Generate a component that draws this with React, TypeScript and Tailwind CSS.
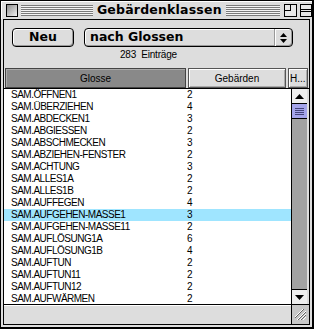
import React from "react";

const rows: [string, string][] = [
  ["SAM.ÖFFNEN1", "2"],
  ["SAM.ÜBERZIEHEN", "4"],
  ["SAM.ABDECKEN1", "3"],
  ["SAM.ABGIESSEN", "2"],
  ["SAM.ABSCHMECKEN", "3"],
  ["SAM.ABZIEHEN-FENSTER", "2"],
  ["SAM.ACHTUNG", "3"],
  ["SAM.ALLES1A", "2"],
  ["SAM.ALLES1B", "2"],
  ["SAM.AUFFEGEN", "4"],
  ["SAM.AUFGEHEN-MASSE1", "3"],
  ["SAM.AUFGEHEN-MASSE11", "2"],
  ["SAM.AUFLÖSUNG1A", "6"],
  ["SAM.AUFLÖSUNG1B", "4"],
  ["SAM.AUFTUN", "2"],
  ["SAM.AUFTUN11", "2"],
  ["SAM.AUFTUN12", "2"],
  ["SAM.AUFWÄRMEN", "2"],
];

const small = { fontFamily: '"Liberation Sans", Arial, sans-serif' };
const bold = { fontFamily: '"DejaVu Sans", "Liberation Sans", sans-serif' };

function Stripes({ className }: { className: string }) {
  return (
    <div
      className={
        "h-[11px] bg-[repeating-linear-gradient(to_bottom,#7a7a7a_0px,#7a7a7a_1px,#f4f4f4_1px,#f4f4f4_2px)] " +
        className
      }
    />
  );
}

export default function App() {
  return (
    <div className="w-[314px] h-[329px] bg-black pl-px pt-px">
      <div className="w-[311px] h-[326px] bg-[#dddddd] flex flex-col">
        {/* title bar */}
        <div className="h-[18px] flex items-center pl-[4px] border-t border-l border-white">
          <div className="w-[13px] h-[13px] border border-black bg-[linear-gradient(135deg,#8a8a8a,#f2f2f2)]" />
          <Stripes className="w-[75px] ml-[3px]" />
          <div
            className="text-[12.5px] font-bold leading-none px-[4px] text-black tracking-[0.2px]"
            style={bold}
          >
            Gebärdenklassen
          </div>
          <Stripes className="w-[57px]" />
          <div className="ml-[4px] w-[13px] h-[13px] border border-black bg-[#e8e8e8] relative">
            <div className="absolute left-0 top-0 w-[6px] h-[6px] border-r border-b border-black" />
          </div>
          <div className="ml-[3px] w-[13px] h-[13px] border border-black bg-[#e8e8e8] flex items-center">
            <div className="w-full h-[3px] border-t border-b border-black" />
          </div>
        </div>

        {/* content frame */}
        <div className="mx-[2px] h-[306px] border border-black flex flex-col">
          {/* top panel */}
          <div className="h-[48px] flex flex-col">
            <div className="flex pl-[8px] pt-[8px] gap-[10px]">
              <div className="w-[62px] h-[19px] rounded-[4px] border border-black bg-[#dddddd] shadow-[inset_1px_1px_0_#fff,inset_-1px_-1px_0_#999] flex items-center justify-center">
                <span className="text-[12.5px] font-bold text-black leading-none" style={bold}>
                  Neu
                </span>
              </div>
              <div className="w-[209px] h-[19px] rounded-[4px] border border-black bg-[#dddddd] shadow-[inset_1px_1px_0_#fff,inset_-1px_-1px_0_#999] flex items-center">
                <span className="flex-1 pl-[5px] text-[12.5px] font-bold text-black leading-none" style={bold}>
                  nach Glossen
                </span>
                <div className="w-[18px] h-full border-l border-[#999] shadow-[inset_1px_0_0_#fff] flex flex-col items-center justify-center gap-[2px]">
                  <svg width="7" height="4" viewBox="0 0 7 4">
                    <path d="M0 4 L3.5 0 L7 4 Z" fill="#000" />
                  </svg>
                  <svg width="7" height="4" viewBox="0 0 7 4">
                    <path d="M0 0 L3.5 4 L7 0 Z" fill="#000" />
                  </svg>
                </div>
              </div>
            </div>
            <div className="pl-[116px] mt-[3px] text-[10px] leading-[10px] text-black tracking-[-0.2px]" style={small}>
              283&nbsp;&nbsp;Einträge
            </div>
          </div>

          {/* header row */}
          <div className="h-[21px] border-b border-black flex pl-px gap-[2px] text-[10px] text-black" style={small}>
            <div className="w-[181px] h-[20px] bg-[#898989] border border-[#444] shadow-[inset_1px_1px_0_#aaa] flex items-center justify-center">
              Glosse
            </div>
            <div className="w-[98px] h-[20px] bg-[#dddddd] border border-[#555] shadow-[inset_1px_1px_0_#fff,inset_-1px_-1px_0_#aaa] flex items-center justify-center">
              Gebärden
            </div>
            <div className="w-[20px] h-[20px] bg-[#dddddd] border border-[#555] shadow-[inset_1px_1px_0_#fff,inset_-1px_-1px_0_#aaa] flex items-center pl-[1px]">
              H...
            </div>
          </div>

          {/* list + scrollbar */}
          <div className="h-[216px] flex border-b border-black">
            <div className="w-[287px] bg-white flex flex-col">
              {rows.map(([g, n], i) => (
                <div
                  key={i}
                  className={
                    "h-[12px] flex items-center text-[10px] leading-[12px] text-black tracking-[-0.5px] " +
                    (i === 10 ? "bg-[#9fe5ff]" : "")
                  }
                  style={small}
                >
                  <span className="w-[183px] pl-[7px]">{g}</span>
                  <span>{n}</span>
                </div>
              ))}
            </div>
            <div className="w-[18px] border-l border-black flex">
              <div className="w-[15px] flex flex-col bg-[#a2a2a2]">
                <div className="h-[15px] bg-[#eeeeee] border-b border-black flex items-center justify-center">
                  <svg width="9" height="5" viewBox="0 0 9 5">
                    <path d="M0 5 L4.5 0 L9 5 Z" fill="#000" />
                  </svg>
                </div>
                <div className="h-[15px] bg-[#a4a4ea] border-b border-black flex flex-col items-center justify-center gap-[1px]">
                  <div className="w-[9px] h-px bg-[#44447a]" />
                  <div className="w-[9px] h-px bg-[#44447a]" />
                  <div className="w-[9px] h-px bg-[#44447a]" />
                  <div className="w-[9px] h-px bg-[#44447a]" />
                </div>
                <div className="flex-1" />
                <div className="h-[15px] bg-[#eeeeee] border-t border-black flex items-center justify-center">
                  <svg width="9" height="5" viewBox="0 0 9 5">
                    <path d="M0 0 L4.5 5 L9 0 Z" fill="#000" />
                  </svg>
                </div>
              </div>
              <div className="w-[2px] bg-[#dddddd]" />
            </div>
          </div>

          {/* bottom bar */}
          <div className="flex-1 flex">
            <div className="w-[287px] bg-[#dddddd] shadow-[inset_0_1px_0_#fff]" />
            <div className="w-[18px] border-l border-black bg-[#c8c8c8] flex items-center justify-center">
              <svg width="13" height="13" viewBox="0 0 13 13">
                <path d="M12 3 L3 12 M12 6 L6 12 M12 9 L9 12 M9 1 L1 9" stroke="#fff" strokeWidth="1" />
                <path d="M12 4 L4 12 M12 7 L7 12 M10 1 L1 10" stroke="#666" strokeWidth="1" />
              </svg>
            </div>
          </div>
        </div>
      </div>
    </div>
  );
}
